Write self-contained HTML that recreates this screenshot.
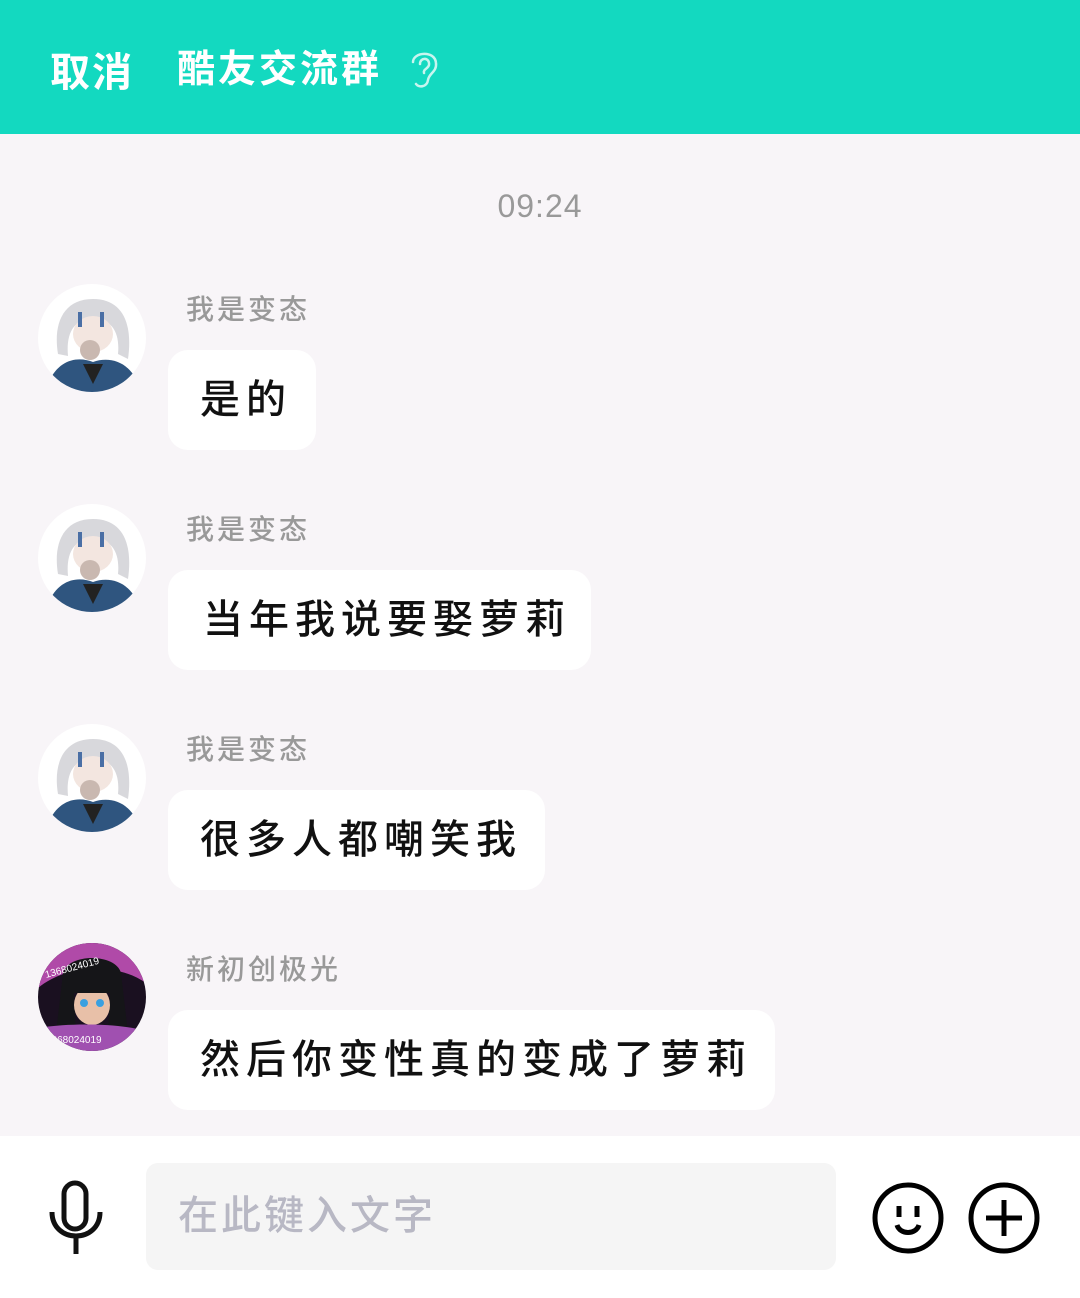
<!DOCTYPE html>
<html><head><meta charset="utf-8"><style>
*{margin:0;padding:0;box-sizing:border-box}
body{width:1080px;height:1298px;background:#f8f5f8;font-family:"Liberation Sans","Noto Sans CJK SC",sans-serif;position:relative;overflow:hidden}
.hd{position:absolute;left:0;top:0;width:1080px;height:134px;background:#13d9c0;color:#fff}
.hd .c{position:absolute;left:50px;top:40px;font-size:40px;font-weight:bold;letter-spacing:2px}
.hd .t{position:absolute;left:177px;top:38px;font-size:38px;font-weight:bold;letter-spacing:3px}
.time{position:absolute;top:188px;width:1080px;text-align:center;font-size:32px;color:#999;letter-spacing:1px}
.av{position:absolute;left:38px;width:108px;height:108px;border-radius:50%;overflow:hidden}
.nm{position:absolute;left:186px;font-size:28px;color:#999;letter-spacing:3px;font-weight:500}
.bb{position:absolute;left:168px;height:100px;background:#fff;border-radius:20px;font-size:40px;color:#111;line-height:100px;padding-left:32px;letter-spacing:6px;white-space:nowrap;font-weight:500}
.ft{position:absolute;left:0;top:1136px;width:1080px;height:162px;background:#fff}
.inp{position:absolute;left:146px;top:27px;width:690px;height:107px;background:#f5f5f5;border-radius:12px;font-size:40px;color:#b8b8c4;line-height:107px;padding-left:32px;letter-spacing:3px;font-weight:500}
</style></head><body>
<div class="hd"><div class="c">取消</div><div class="t">酷友交流群</div>
<svg style="position:absolute;left:405px;top:46px" width="38" height="44" viewBox="0 0 38 44"><path d="M8 16 C8 6 30 4 31 17 C32 26 24 27 23 34 C22 41 14 42 11 38 M15 18 C15 11 25 11 24 19 C23 23 18 23 19 27" fill="none" stroke="#c8f5ef" stroke-width="2.5" stroke-linecap="round"/></svg></div>
<div class="time">09:24</div>

<svg width="0" height="0" style="position:absolute"><defs>
<g id="ga"><rect width="108" height="108" fill="#fff"/>
<path d="M20 70 C15 40 25 15 55 15 C85 15 95 40 90 75 L80 70 C82 50 75 35 55 35 C35 35 28 50 30 72Z" fill="#d8d8dc"/>
<ellipse cx="55" cy="50" rx="20" ry="18" fill="#f3e6e0"/>
<rect x="40" y="28" width="4" height="15" fill="#4a6fa5"/><rect x="62" y="28" width="4" height="15" fill="#4a6fa5"/>
<path d="M10 100 C20 75 40 72 55 78 C72 72 92 78 100 100 L100 108 L10 108Z" fill="#2f557f"/>
<path d="M45 80 L55 100 L65 80Z" fill="#222"/><ellipse cx="52" cy="66" rx="10" ry="10" fill="#c9b8b0"/>
</g>
<g id="gb"><rect width="108" height="108" fill="#1a1020"/>
<path d="M0 0 H108 V40 C80 20 30 20 0 45Z" fill="#b04aa8"/>
<path d="M25 30 C30 10 78 10 83 30 L90 90 L70 90 L72 50 L36 50 L38 90 L18 90Z" fill="#151518"/>
<ellipse cx="54" cy="62" rx="18" ry="20" fill="#e8c0a8"/>
<rect x="36" y="32" width="36" height="18" fill="#151518"/>
<circle cx="46" cy="60" r="4" fill="#3aa0e0"/><circle cx="62" cy="60" r="4" fill="#3aa0e0"/>
<path d="M0 85 C30 80 80 80 108 88 V108 H0Z" fill="#a050b0"/>
<text x="8" y="35" font-size="10" fill="#fff" font-family="Liberation Sans" transform="rotate(-15 8 35)">1368024019</text>
<text x="8" y="100" font-size="10" fill="#fff" font-family="Liberation Sans">1368024019</text>
</g></defs></svg>

<svg class="av" style="top:284px" viewBox="0 0 108 108"><use href="#ga"/></svg>
<div class="nm" style="top:288px">我是变态</div>
<div class="bb" style="top:350px;width:148px">是的</div>

<svg class="av" style="top:504px" viewBox="0 0 108 108"><use href="#ga"/></svg>
<div class="nm" style="top:508px">我是变态</div>
<div class="bb" style="top:570px;width:423px;padding-left:35px">当年我说要娶萝莉</div>

<svg class="av" style="top:724px" viewBox="0 0 108 108"><use href="#ga"/></svg>
<div class="nm" style="top:728px">我是变态</div>
<div class="bb" style="top:790px;width:377px">很多人都嘲笑我</div>

<svg class="av" style="top:943px" viewBox="0 0 108 108"><use href="#gb"/></svg>
<div class="nm" style="top:948px">新初创极光</div>
<div class="bb" style="top:1010px;width:607px">然后你变性真的变成了萝莉</div>

<div class="ft">
<svg style="position:absolute;left:46px;top:44px" width="60" height="76" viewBox="0 0 60 76"><rect x="18" y="3" width="22" height="46" rx="11" fill="none" stroke="#111" stroke-width="5"/><path d="M6 32 C6 64 54 64 54 32" fill="none" stroke="#111" stroke-width="5"/><line x1="30" y1="56" x2="30" y2="74" stroke="#111" stroke-width="5"/></svg>
<div class="inp">在此键入文字</div>
<svg style="position:absolute;left:870px;top:44px" width="76" height="76" viewBox="0 0 76 76"><circle cx="38" cy="38" r="33" fill="none" stroke="#000" stroke-width="5"/><line x1="29" y1="26" x2="29" y2="37" stroke="#000" stroke-width="5"/><line x1="47" y1="26" x2="47" y2="37" stroke="#000" stroke-width="5"/><path d="M27 45 C30 55 46 55 49 45" fill="none" stroke="#000" stroke-width="5"/></svg>
<svg style="position:absolute;left:966px;top:44px" width="76" height="76" viewBox="0 0 76 76"><circle cx="38" cy="38" r="33" fill="none" stroke="#000" stroke-width="5"/><line x1="38" y1="20" x2="38" y2="56" stroke="#000" stroke-width="5"/><line x1="20" y1="38" x2="56" y2="38" stroke="#000" stroke-width="5"/></svg>
</div>
</body></html>
